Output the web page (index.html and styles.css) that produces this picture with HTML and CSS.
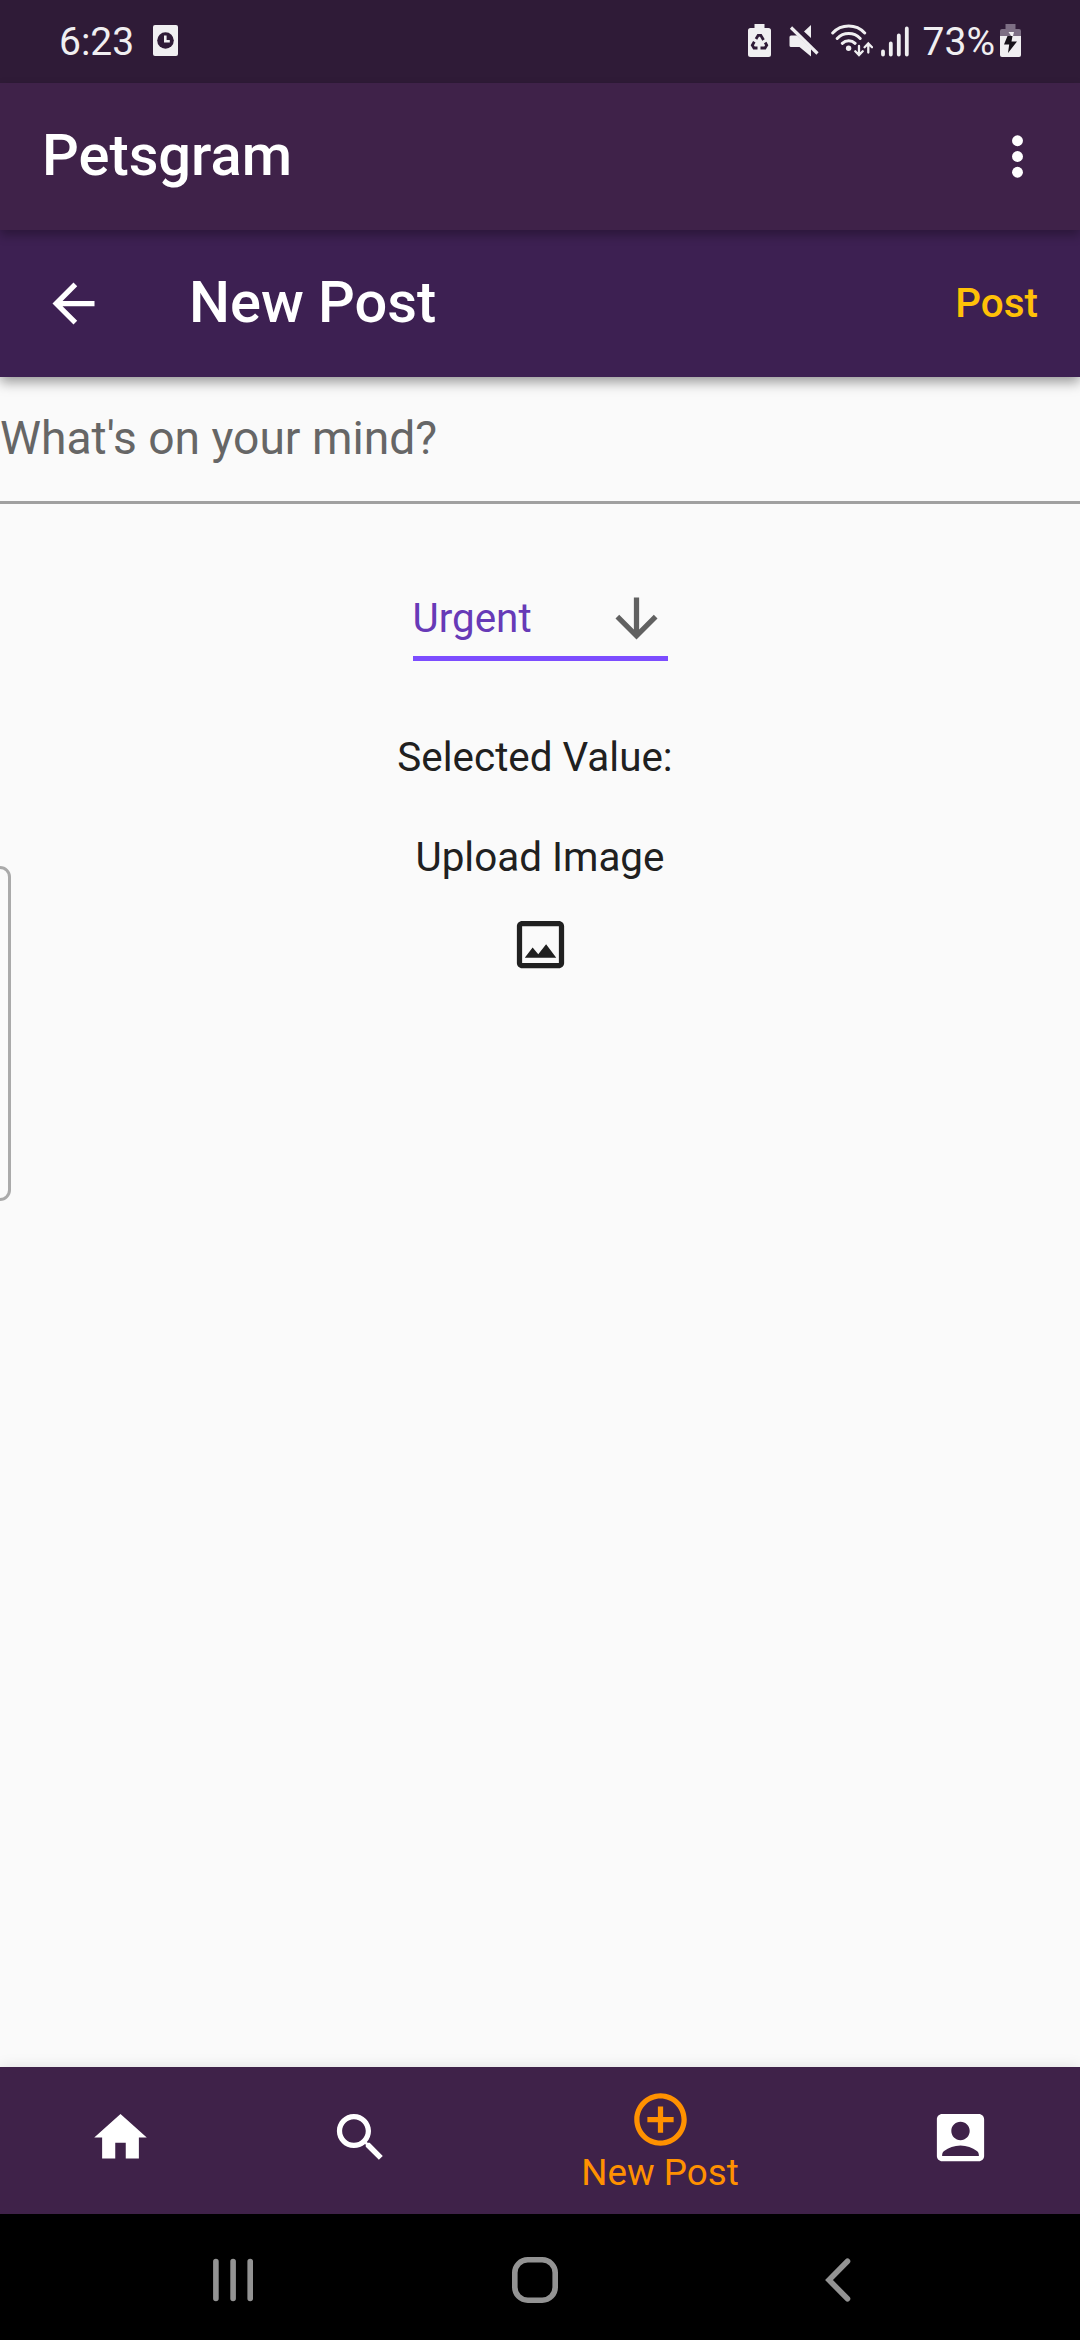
FILE: index.html
```html
<!DOCTYPE html>
<html lang="en">
<head>
<meta charset="utf-8">
<title>Petsgram</title>
<link rel="stylesheet" href="styles.css">
</head>
<body>
<div class="screen">
  <header class="status">
    <div class="status-left">
      <span class="time">6:23</span>
      <svg class="alarm" width="25" height="31" viewBox="0 0 25 31"><rect width="25" height="31" rx="2" fill="#f0eff1"/><circle cx="12.5" cy="15.5" r="8.3" fill="#2f1b37"/><path d="M12.3 10.500v5.700h4.500" fill="none" stroke="#f0eff1" stroke-width="2.600"/></svg>
    </div>
    <div class="status-right">
      <svg class="saver" width="23" height="33" viewBox="0 0 23 33"><path d="M6.500 0h10v4h4a2.500 2.500 0 0 1 2.500 2.500v24a2.500 2.500 0 0 1-2.500 2.500h-18A2.500 2.500 0 0 1 0 30.500v-24A2.500 2.500 0 0 1 2.500 4h4z" fill="#f0eff1"/><path d="M8 15l2.200-3.700h2.600l2.700 4.700M17.200 18.500l1.500 2.800-1.700 2.700h-4.500M9.500 24H6l-1.700-2.700 2-3.500" fill="none" stroke="#2f1b37" stroke-width="2.800"/></svg>
      <svg class="mute" width="30" height="32" viewBox="0 0 30 32"><path d="M2 10.500h6l14 13v8L10.500 22H2a1.500 1.500 0 0 1-1.500-1.500V12A1.500 1.500 0 0 1 2 10.500zM22 0v13l-7-6.500z" fill="#f0eff1"/><path d="M3.500 -.5L30 25.500" stroke="#2f1b37" stroke-width="3"/><path d="M2 2.500L28.500 28.500" stroke="#f0eff1" stroke-width="3.200"/></svg>
      <svg class="wifi" width="42" height="33" viewBox="0 0 42 33"><g fill="none" stroke="#f0eff1" stroke-width="3" stroke-linecap="round"><path d="M1.700 9a22 22 0 0 1 32 0M6.200 14.500a16 16 0 0 1 23 0M11.300 19.300a9.200 9.200 0 0 1 12.800 0"/><path d="M28 22v9M24.300 27.300l3.700 3.700 3.700-3.700M37.300 28.500v-9M33.600 23.200l3.700-3.700 3.700 3.700" stroke-width="2.300"/></g><circle cx="17.600" cy="24.300" r="2.700" fill="#f0eff1"/></svg>
      <svg class="signal" width="28" height="31" viewBox="0 0 28 31"><path d="M2 25.500v3M9.800 17.500v11M17.800 9.500v19M25.800 2.500v26" stroke="#f0eff1" stroke-width="3.800" stroke-linecap="round"/></svg>
      <span class="percent">73%</span>
      <svg class="battery" width="21" height="33" viewBox="0 0 21 33"><path d="M5.500 0h10v5H19a2 2 0 0 1 2 2v5H0V7a2 2 0 0 1 2-2h3.500z" fill="#7d6f84"/><path d="M0 12h21v19a2 2 0 0 1-2 2H2a2 2 0 0 1-2-2z" fill="#f0eff1"/><path d="M8.500 8h5.500l-1.500 6z" fill="#f0eff1"/><path d="M7.500 12h5l-1 5.500h5.500L8 29l1.200-8.500H4z" fill="#17131a"/></svg>
    </div>
  </header>
  <div class="bar app-bar">
    <h1 class="title">Petsgram</h1>
    <svg class="more" width="63" height="63" viewBox="0 0 24 24" fill="#fff"><circle cx="12" cy="6" r="2.080"/><circle cx="12" cy="12" r="2.080"/><circle cx="12" cy="18" r="2.080"/></svg>
  </div>
  <div class="bar post-bar">
    <svg class="back" width="63" height="63" viewBox="0 0 24 24" fill="#fff"><path d="M20 11H7.830l5.590-5.590L12 4l-8 8 8 8 1.410-1.410L7.830 13H20v-2z"/></svg>
    <h2 class="title">New Post</h2>
    <span class="post">Post</span>
  </div>
  <main class="content">
    <div class="field">What's on your mind?</div>
    <div class="select">
      <span>Urgent</span>
      <svg width="63" height="63" viewBox="0 0 24 24" fill="#616161"><path d="M20 12l-1.410-1.410L13 16.170V4h-2v12.170l-5.580-5.590L4 12l8 8 8-8z"/></svg>
    </div>
    <p class="selected">Selected Value: </p>
    <p class="upload">Upload Image</p>
    <svg class="picture" width="63" height="63" viewBox="0 0 24 24" fill="#202020"><path d="M19 5v14H5V5h14m0-2H5c-1.100 0-2 .9-2 2v14c0 1.100.9 2 2 2h14c1.100 0 2-.9 2-2V5c0-1.100-.9-2-2-2zm-4.860 8.860l-3 3.870L9 13.140 6 17h12l-3.860-5.140z"/></svg>
    <div class="edge-handle"></div>
  </main>
  <nav class="tabs">
    <div class="tab"><svg width="63" height="63" viewBox="0 0 24 24"><path d="M10 20v-6h4v6h5v-8h3L12 3 2 12h3v8z"/></svg></div>
    <div class="tab"><svg width="63" height="63" viewBox="0 0 24 24"><path d="M15.500 14h-.79l-.28-.27C15.410 12.590 16 11.110 16 9.500 16 5.910 13.090 3 9.500 3S3 5.910 3 9.500 5.910 16 9.500 16c1.610 0 3.090-.59 4.230-1.570l.27.28v.79l5 4.990L20.490 19l-4.990-5zm-6 0C7.010 14 5 11.990 5 9.500S7.010 5 9.500 5 14 7.010 14 9.500 11.990 14 9.500 14z"/></svg></div>
    <div class="tab active"><svg width="63" height="63" viewBox="0 0 24 24"><path d="M13 7h-2v4H7v2h4v4h2v-4h4v-2h-4V7zm-1-5C6.480 2 2 6.480 2 12s4.480 10 10 10 10-4.480 10-10S17.520 2 12 2zm0 18c-4.410 0-8-3.590-8-8s3.590-8 8-8 8 3.590 8 8-3.590 8-8 8z"/></svg><span>New Post</span></div>
    <div class="tab"><svg width="63" height="63" viewBox="0 0 24 24"><path d="M19 3H5c-1.100 0-2 .9-2 2v14c0 1.100.9 2 2 2h14c1.100 0 2-.9 2-2V5c0-1.100-.9-2-2-2zm-7 3c1.930 0 3.500 1.570 3.500 3.500S13.930 13 12 13s-3.500-1.570-3.500-3.500S10.070 6 12 6zm7 13H5v-.23c0-.62.28-1.200.76-1.580C7.470 15.820 9.640 15 12 15s4.530.82 6.240 2.190c.48.38.76.97.76 1.580V19z"/></svg></div>
  </nav>
  <footer class="system-nav">
    <svg width="42" height="44" viewBox="0 0 42 44"><path d="M3.900 3.500v37M21.100 3.500v37M38.200 3.500v37"/></svg>
    <svg class="nav-home" width="46" height="46" viewBox="0 0 46 46"><rect x="2.800" y="2.800" width="40.400" height="40.400" rx="13"/></svg>
    <svg width="26" height="44" viewBox="0 0 26 44"><path d="M22.500 3.200L4 22l18.500 18.800"/></svg>
  </footer>
</div>
</body>
</html>
```
FILE: styles.css
```css
* { box-sizing: border-box; }
body { margin: 0; font-family: Roboto, sans-serif; }
h1, h2, p { margin: 0; font-weight: 400; }
svg { display: block; flex: none; }
.screen { width: 1080px; height: 2340px; display: flex; flex-direction: column; overflow: hidden; background: #fafafa; }

.status { flex: none; height: 83px; display: flex; justify-content: space-between; padding: 0 59px; background: #2f1b37; color: #f0eff1; font-size: 39px; line-height: 85px; }
.status-left, .status-right { display: flex; }
.time { width: 94px; }
.percent { width: 74px; text-align: right; }
.alarm { margin-top: 25px; }
.saver { margin: 24px 18px 0 0; }
.mute { margin: 25px 12px 0 0; }
.wifi { margin: 24px 8px 0 0; }
.signal { margin: 26px 12px 0 0; }
.battery { margin: 24px 0 0 5px; }

.bar { flex: none; height: 147px; display: flex; align-items: center; position: relative; color: #fff; }
.app-bar { z-index: 2; padding: 0 31.500px 0 42px; justify-content: space-between; background: #3f2249; box-shadow: 0 5px 10px rgba(0, 0, 0, .3); }
.post-bar { z-index: 1; padding: 0 42px; background: #3d2052; box-shadow: 0 5px 12px rgba(0, 0, 0, .4); }
.title { padding-bottom: 3px; font-size: 57.750px; font-weight: 500; line-height: 68px; }
.back { margin-right: 84px; }
.post { margin-left: auto; color: #ffc107; font-size: 40.400px; font-weight: 500; }

.content { flex: 1; position: relative; display: flex; flex-direction: column; align-items: center; color: #202020; font-size: 40.400px; line-height: 48px; }
.field { align-self: stretch; height: 127px; padding-top: 34px; border-bottom: 3px solid #a0a0a0; color: #666; font-size: 46.200px; line-height: 54px; }
.select { width: 255px; height: 79px; margin-top: 78px; display: flex; justify-content: space-between; color: #673ab7; border-bottom: 5px solid #7c4dff; }
.select span { margin-top: 13px; }
.select svg { margin-top: 5px; }
.selected { margin-top: 73px; white-space: pre; }
.upload { margin-top: 52px; }
.picture { margin-top: 31px; }
.edge-handle { position: absolute; left: -20px; top: 489px; width: 31px; height: 335px; border: 3px solid #aaa; border-radius: 11px; }

.tabs { flex: none; height: 147px; display: grid; grid-template-columns: 240px 240px 360px 240px; background: #3f2249; box-shadow: 0 0 14px rgba(0, 0, 0, .1); position: relative; fill: #fff; }
.tab { display: flex; flex-direction: column; align-items: center; padding-top: 39px; }
.active { padding-top: 21px; fill: #ff9100; color: #ff9100; font-size: 36.750px; line-height: 43px; }

.system-nav { flex: none; height: 126px; display: flex; align-items: center; padding: 6px 0 0 211.500px; background: #000; fill: none; stroke: #939393; stroke-width: 5.600; stroke-linecap: round; }
.nav-home { margin: 0 266.500px 0 258.500px; }
```
